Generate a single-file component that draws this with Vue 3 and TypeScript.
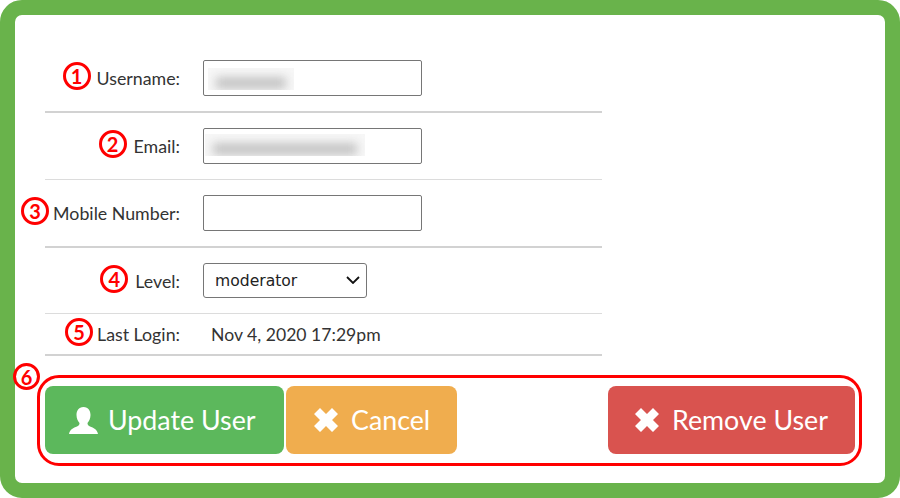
<script setup lang="ts">
import { ref } from 'vue'

const level = ref('moderator')
const levels = ['admin', 'moderator', 'user']
</script>

<template>
  <div class="frame">
    <div class="card">
      <div class="form">
        <div class="row row-thick">
          <div class="label"><span class="badge">1</span><span class="gap-6">Username:</span></div>
          <div class="value">
            <div class="field">
              <input class="input" type="text" aria-label="Username" />
              <div class="redact redact-short"><div class="smear"></div></div>
            </div>
          </div>
        </div>

        <div class="row row-thin">
          <div class="label"><span class="badge">2</span><span class="gap-7">Email:</span></div>
          <div class="value">
            <div class="field">
              <input class="input" type="text" aria-label="Email" />
              <div class="redact redact-long"><div class="smear"></div></div>
            </div>
          </div>
        </div>

        <div class="row row-thick">
          <div class="label"><span class="badge">3</span><span class="gap-4">Mobile Number:</span></div>
          <div class="value">
            <div class="field">
              <input class="input" type="text" aria-label="Mobile Number" />
            </div>
          </div>
        </div>

        <div class="row row-thin row-level">
          <div class="label"><span class="badge">4</span><span class="gap-7">Level:</span></div>
          <div class="value">
            <div class="select-wrap">
              <select v-model="level" class="select" aria-label="Level">
                <option v-for="item in levels" :key="item" :value="item">{{ item }}</option>
              </select>
              <svg class="chevron" viewBox="0 0 14 8" aria-hidden="true">
                <path d="M1 1l6 6 6-6" />
              </svg>
            </div>
          </div>
        </div>

        <div class="row row-thick row-login">
          <div class="label"><span class="badge">5</span><span class="gap-4">Last Login:</span></div>
          <div class="value text-value">Nov 4, 2020 17:29pm</div>
        </div>
      </div>

      <div class="actions">
        <span class="badge badge-actions">6</span>
        <button class="btn btn-success" type="button">
          <svg class="icon-user" viewBox="0 0 29 27" aria-hidden="true">
            <path d="M14.5 0C9.5 0 7.5 4 7.5 8c0 3.5 1.5 6.5 3 8 0 1.5-.5 2.500-2.500 3.500C4.500 21 1 22 0 27h29c-1-5-4.500-6-8-7.500-2-1-2.500-2-2.500-3.500 1.500-1.500 3-4.500 3-8 0-4-2-8-7-8z" />
          </svg>
          Update User
        </button>
        <button class="btn btn-warning" type="button">
          <svg class="icon-x" viewBox="0 0 24 24" aria-hidden="true">
            <polygon points="6,0 12,6 18,0 24,6 18,12 24,18 18,24 12,18 6,24 0,18 6,12 0,6" />
          </svg>
          Cancel
        </button>
        <button class="btn btn-danger" type="button">
          <svg class="icon-x" viewBox="0 0 24 24" aria-hidden="true">
            <polygon points="6,0 12,6 18,0 24,6 18,12 24,18 18,24 12,18 6,24 0,18 6,12 0,6" />
          </svg>
          Remove User
        </button>
      </div>
    </div>
  </div>
</template>

<style>
html,
body {
  margin: 0;
  background: #fff;
}
</style>

<style scoped>
.frame {
  box-sizing: border-box;
  width: 900px;
  height: 498px;
  border: 15px solid #69b34b;
  border-radius: 22px;
  font-family: Lato, "Liberation Sans", sans-serif;
  font-size: 17.8px;
  color: #333;
}

.card {
  padding-top: 30px;
}

.form {
  width: 557px;
  margin-left: 30px;
}

.row {
  display: grid;
  grid-template-columns: 135px 1fr;
  column-gap: 23px;
  box-sizing: border-box;
  align-items: flex-start;
  padding-top: 15px;
}

.row-thick {
  height: 68px;
  border-bottom: 2px solid #d2d2d2;
}

.row-thin {
  height: 67px;
  border-bottom: 1px solid #dcdcdc;
}

.row-level {
  height: 66px;
}

.row-login {
  height: 42px;
  padding-top: 0;
  align-items: center;
}

.label {
  display: flex;
  justify-content: flex-end;
  align-items: center;
  height: 36px;
  white-space: nowrap;
}

.gap-4 {
  margin-left: 4px;
}

.gap-6 {
  margin-left: 6px;
}

.gap-7 {
  margin-left: 7px;
}

.badge {
  display: flex;
  align-items: center;
  justify-content: center;
  flex: none;
  box-sizing: border-box;
  width: 28px;
  height: 28px;
  margin-top: -4px;
  border: 3px solid #f00;
  border-radius: 50%;
  background: #fff;
  color: #f00;
  font-size: 20px;
  font-weight: 700;
  line-height: 1;
}

.field {
  position: relative;
  width: 219px;
  height: 36px;
}

.input {
  display: block;
  box-sizing: border-box;
  width: 100%;
  height: 100%;
  border: 1px solid #767676;
  border-radius: 2px;
  background: #fff;
}

.redact {
  position: absolute;
  top: 8px;
  height: 22px;
  overflow: hidden;
  background: #f7f7f7;
}

.redact-short {
  left: 5px;
  width: 86px;
}

.redact-long {
  left: 2px;
  top: 6px;
  width: 160px;
}

.smear {
  height: 12px;
  margin: 9px 8px 0;
  background: #c4c4c4;
  filter: blur(5px);
}

.select-wrap {
  position: relative;
  width: 164px;
  height: 35px;
}

.select {
  display: block;
  box-sizing: border-box;
  width: 100%;
  height: 100%;
  padding: 0 11px;
  border: 1px solid #767676;
  border-radius: 3px;
  background: #fff;
  color: #222;
  font-family: "DejaVu Sans", sans-serif;
  font-size: 15.6px;
  appearance: none;
}

.chevron {
  position: absolute;
  top: 13px;
  right: 7px;
  width: 14px;
  height: 8px;
  fill: none;
  stroke: #111;
  stroke-width: 1.8;
  pointer-events: none;
}

.text-value {
  padding-left: 8px;
  font-size: 17.6px;
}

.actions {
  position: relative;
  display: flex;
  gap: 2px;
  box-sizing: border-box;
  height: 91px;
  margin: 19px 23px 0 22px;
  padding: 8px 4px 0 5px;
  border: 3px solid #f00;
  border-radius: 22px;
}

.badge-actions {
  position: absolute;
  top: -15px;
  left: -27px;
  margin-top: 0;
  width: 27px;
  height: 27px;
}

.btn {
  display: flex;
  align-items: center;
  box-sizing: border-box;
  height: 68px;
  padding: 0 26px;
  border: 0;
  border-radius: 8px;
  color: #fff;
  font-family: inherit;
  font-size: 26.8px;
  white-space: nowrap;
}

.btn-success {
  width: 239px;
  padding-left: 24px;
  background: #5cb85c;
}

.btn-warning {
  width: 171px;
  padding-left: 28px;
  background: #f0ad4e;
}

.btn-danger {
  width: 247px;
  margin-left: auto;
  padding-left: 27px;
  background: #d9534f;
}

.icon-user {
  width: 29px;
  height: 27px;
  margin-right: 10px;
  fill: #fff;
}

.icon-x {
  width: 24px;
  height: 24px;
  margin-right: 13px;
  fill: #fff;
}
</style>
